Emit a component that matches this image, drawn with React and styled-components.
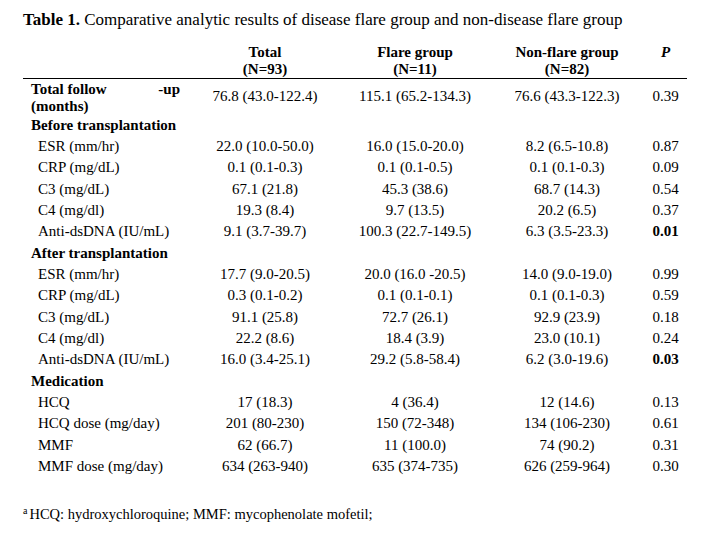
import React from "react";
import styled, { createGlobalStyle } from "styled-components";

const GlobalStyle = createGlobalStyle`
  html, body {
    margin: 0;
    padding: 0;
    background: #ffffff;
  }
  body {
    font-family: "Liberation Serif", "Times New Roman", serif;
    color: #000000;
  }
`;

const Page = styled.div`
  width: 704px;
  height: 537px;
  box-sizing: border-box;
  padding: 10px 0 0 23px;
  overflow: hidden;
`;

const Title = styled.p`
  margin: 0;
  font-size: 17px;
  line-height: 20px;
  white-space: nowrap;
`;

const Strong = styled.b`
  font-weight: 700;
`;

const Table = styled.table`
  margin-top: 14px;
  width: 664px;
  border-collapse: collapse;
  border-spacing: 0;
  table-layout: fixed;
  font-size: 15px;
  line-height: 17px;
`;

const HeadCell = styled.th`
  padding: 0;
  font-weight: 700;
  font-style: ${(p) => (p.$italic ? "italic" : "normal")};
  text-align: center;
  vertical-align: top;
  border-bottom: 1px solid #000000;
`;

const Row = styled.tr`
  height: ${(p) => (p.$tall ? "auto" : "21.33px")};
`;

const LabelCell = styled.td`
  padding: ${(p) => (p.$tall ? "1.5px 10px 0 8px" : `0 0 0 ${p.$indent ? 15 : 8}px`)};
  font-weight: ${(p) => (p.$bold ? 700 : 400)};
  text-align: left;
  vertical-align: middle;
  white-space: nowrap;
`;

const SplitLine = styled.span`
  display: flex;
  justify-content: space-between;
`;

const ValueCell = styled.td`
  padding: 0;
  text-align: center;
  vertical-align: middle;
  white-space: nowrap;
  font-weight: ${(p) => (p.$bold ? 700 : 400)};
`;

const Footnote = styled.p`
  margin: 29px 0 0 0;
  font-size: 14.5px;
  line-height: 17px;
`;

const Sup = styled.sup`
  font-size: 10px;
  line-height: 0;
  vertical-align: 5px;
  margin-right: 2px;
`;

const rows = [
  { section: "Before transplantation" },
  { label: "ESR (mm/hr)", v: ["22.0 (10.0-50.0)", "16.0 (15.0-20.0)", "8.2 (6.5-10.8)", "0.87"] },
  { label: "CRP (mg/dL)", v: ["0.1 (0.1-0.3)", "0.1 (0.1-0.5)", "0.1 (0.1-0.3)", "0.09"] },
  { label: "C3 (mg/dL)", v: ["67.1 (21.8)", "45.3 (38.6)", "68.7 (14.3)", "0.54"] },
  { label: "C4 (mg/dl)", v: ["19.3 (8.4)", "9.7 (13.5)", "20.2 (6.5)", "0.37"] },
  { label: "Anti-dsDNA (IU/mL)", v: ["9.1 (3.7-39.7)", "100.3 (22.7-149.5)", "6.3 (3.5-23.3)", "0.01"], sig: true },
  { section: "After transplantation" },
  { label: "ESR (mm/hr)", v: ["17.7 (9.0-20.5)", "20.0 (16.0 -20.5)", "14.0 (9.0-19.0)", "0.99"] },
  { label: "CRP (mg/dL)", v: ["0.3 (0.1-0.2)", "0.1 (0.1-0.1)", "0.1 (0.1-0.3)", "0.59"] },
  { label: "C3 (mg/dL)", v: ["91.1 (25.8)", "72.7 (26.1)", "92.9 (23.9)", "0.18"] },
  { label: "C4 (mg/dl)", v: ["22.2 (8.6)", "18.4 (3.9)", "23.0 (10.1)", "0.24"] },
  { label: "Anti-dsDNA (IU/mL)", v: ["16.0 (3.4-25.1)", "29.2 (5.8-58.4)", "6.2 (3.0-19.6)", "0.03"], sig: true },
  { section: "Medication" },
  { label: "HCQ", v: ["17 (18.3)", "4 (36.4)", "12 (14.6)", "0.13"] },
  { label: "HCQ dose (mg/day)", v: ["201 (80-230)", "150 (72-348)", "134 (106-230)", "0.61"] },
  { label: "MMF", v: ["62 (66.7)", "11 (100.0)", "74 (90.2)", "0.31"] },
  { label: "MMF dose (mg/day)", v: ["634 (263-940)", "635 (374-735)", "626 (259-964)", "0.30"] },
];

export default function App() {
  return (
    <>
      <GlobalStyle />
      <Page>
        <Title>
          <Strong>Table 1.</Strong> Comparative analytic results of disease flare group and non-disease flare group
        </Title>
        <Table>
          <colgroup>
            <col style={{ width: 167 }} />
            <col style={{ width: 150 }} />
            <col style={{ width: 150 }} />
            <col style={{ width: 154 }} />
            <col style={{ width: 43 }} />
          </colgroup>
          <thead>
            <tr>
              <HeadCell />
              <HeadCell>
                Total
                <br />
                (N=93)
              </HeadCell>
              <HeadCell>
                Flare group
                <br />
                (N=11)
              </HeadCell>
              <HeadCell>
                Non-flare group
                <br />
                (N=82)
              </HeadCell>
              <HeadCell $italic>P</HeadCell>
            </tr>
          </thead>
          <tbody>
            <Row $tall>
              <LabelCell $bold $tall>
                <SplitLine>
                  <span>Total follow</span>
                  <span>-up</span>
                </SplitLine>
                (months)
              </LabelCell>
              <ValueCell>76.8 (43.0-122.4)</ValueCell>
              <ValueCell>115.1 (65.2-134.3)</ValueCell>
              <ValueCell>76.6 (43.3-122.3)</ValueCell>
              <ValueCell>0.39</ValueCell>
            </Row>
            {rows.map((r, i) =>
              r.section ? (
                <Row key={i}>
                  <LabelCell $bold colSpan={5}>
                    {r.section}
                  </LabelCell>
                </Row>
              ) : (
                <Row key={i}>
                  <LabelCell $indent>{r.label}</LabelCell>
                  <ValueCell>{r.v[0]}</ValueCell>
                  <ValueCell>{r.v[1]}</ValueCell>
                  <ValueCell>{r.v[2]}</ValueCell>
                  <ValueCell $bold={r.sig}>{r.v[3]}</ValueCell>
                </Row>
              )
            )}
          </tbody>
        </Table>
        <Footnote>
          <Sup>a</Sup>HCQ: hydroxychloroquine; MMF: mycophenolate mofetil;
        </Footnote>
      </Page>
    </>
  );
}
